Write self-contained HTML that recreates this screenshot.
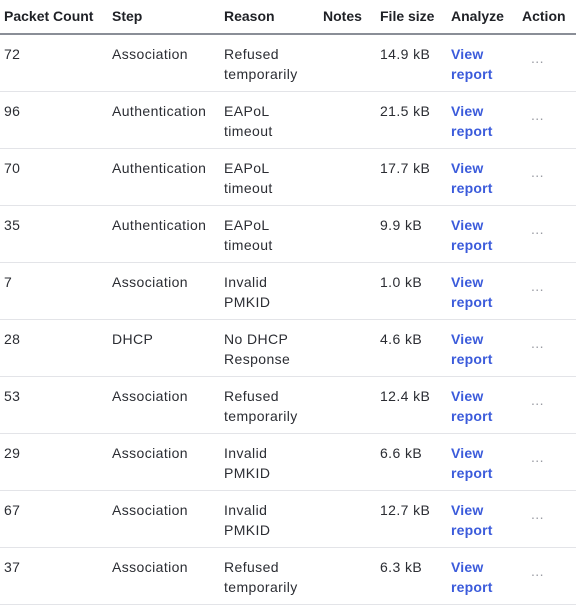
<!DOCTYPE html><html><head><style>
body{margin:0;width:576px;height:607px;overflow:hidden;background:#fff;font-family:"Liberation Sans",sans-serif;color:#2b2d33;font-size:14px;letter-spacing:0.4px}
.h{position:absolute;top:8px;font-weight:bold;font-size:14px;color:#1f2126;letter-spacing:0}
.hl{position:absolute;left:0;top:33px;width:576px;height:2px;background:#8a8e97}
.r{position:absolute;left:0;width:576px;height:57px;border-bottom:1px solid #e3e4e8;box-sizing:border-box}
.c{position:absolute;top:9px;line-height:20px}
.v{color:#3b5bdb;font-weight:bold;letter-spacing:0.2px}
.d{color:#9a9ca3;top:13px}
</style></head><body>
<div class="h" style="left:4px">Packet Count</div>
<div class="h" style="left:112px">Step</div>
<div class="h" style="left:224px">Reason</div>
<div class="h" style="left:323px">Notes</div>
<div class="h" style="left:380px">File size</div>
<div class="h" style="left:451px">Analyze</div>
<div class="h" style="left:522px">Action</div>
<div class="hl"></div>
<script>
var d=[["72","Association","Refused<br>temporarily","14.9 kB"],["96","Authentication","EAPoL<br>timeout","21.5 kB"],["70","Authentication","EAPoL<br>timeout","17.7 kB"],["35","Authentication","EAPoL<br>timeout","9.9 kB"],["7","Association","Invalid<br>PMKID","1.0 kB"],["28","DHCP","No DHCP<br>Response","4.6 kB"],["53","Association","Refused<br>temporarily","12.4 kB"],["29","Association","Invalid<br>PMKID","6.6 kB"],["67","Association","Invalid<br>PMKID","12.7 kB"],["37","Association","Refused<br>temporarily","6.3 kB"]];
d.forEach(function(r,i){document.write('<div class="r" style="top:'+(35+57*i)+'px"><div class="c" style="left:4px">'+r[0]+'</div><div class="c" style="left:112px">'+r[1]+'</div><div class="c" style="left:224px">'+r[2]+'</div><div class="c" style="left:380px">'+r[3]+'</div><div class="c v" style="left:451px">View<br>report</div><div class="c d" style="left:531px">...</div></div>')});
</script>
</body></html>
